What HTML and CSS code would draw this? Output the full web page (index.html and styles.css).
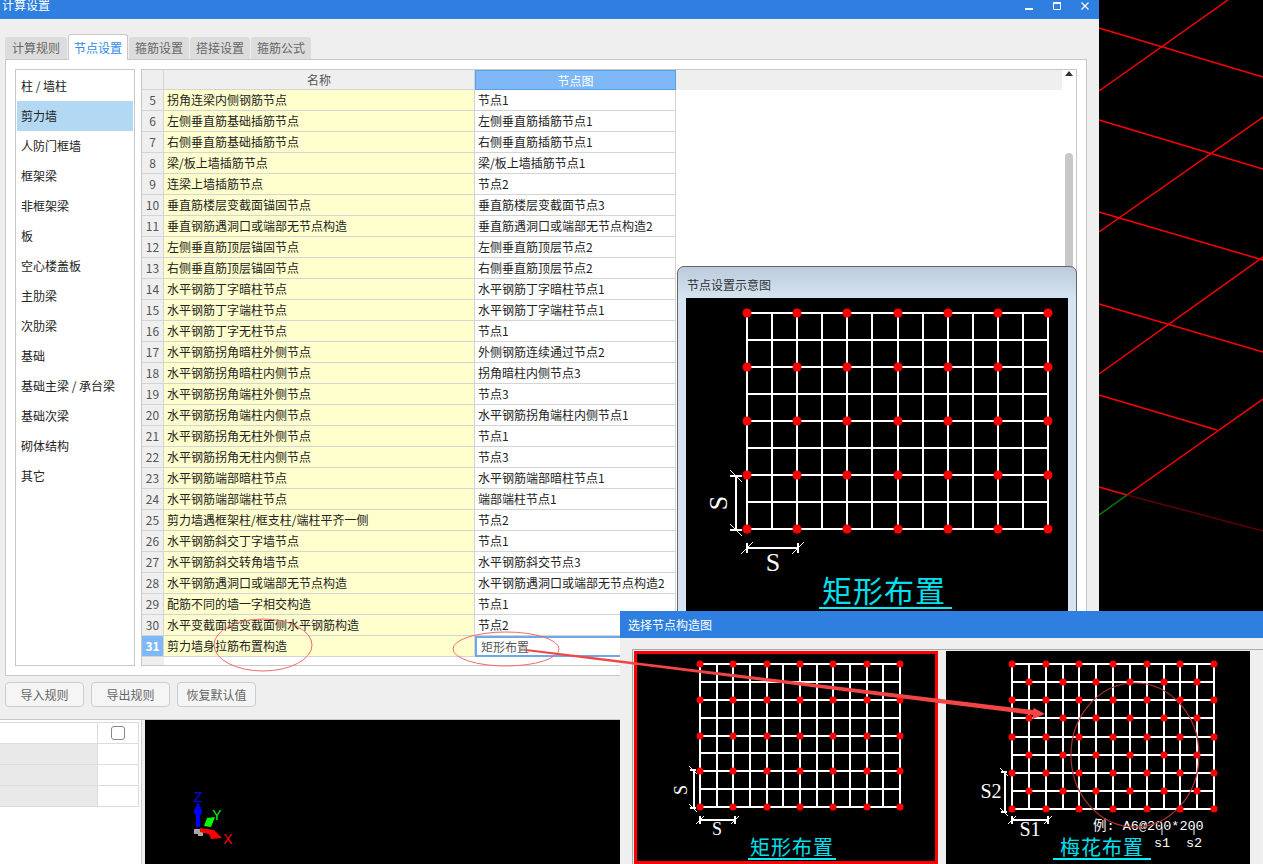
FILE: index.html
```html
<!DOCTYPE html>
<html lang="zh-CN">
<head>
    <meta charset="UTF-8">
    <title>计算设置</title>
    <link rel="stylesheet" href="styles.css">
</head>
<body>
<div class="desk">
    <!-- 3D view behind the dialog -->
    <svg class="scene" width="1263" height="864">
        <g class="scene-red">
            <path d="M1099 28L1263 77M1099 120L1263 169M1099 212L1263 260M1099 304L1263 352M1099 395L1217 430M1099 487L1127 495"/>
            <path d="M1099 91L1228 0M1099 232L1263 117M1099 374L1263 257M1127 495L1263 399"/>
        </g>
        <path class="scene-dark" d="M1127 495L1263 531"/>
        <path class="scene-green" d="M1099 515L1127 495"/>
    </svg>

    <div class="main">
        <div class="titlebar">
            <span class="title-text">计算设置</span>
            <div class="win-controls">
                <svg width="8" height="8"><path d="M0 6h8v2H0z" fill="#fff"/></svg>
                <svg width="8" height="8"><path d="M0.5 1.5h7v6h-7z" fill="none" stroke="#fff"/><path d="M0 0h8v2H0z" fill="#fff"/></svg>
                <svg width="8" height="8"><path d="M0.5 0.5L7.5 7.5M7.5 0.5L0.5 7.5" stroke="#fff" stroke-width="1.3"/></svg>
            </div>
        </div>

        <div class="tabs">
            <div class="tab tab-first">计算规则</div>
            <div class="tab active">节点设置</div>
            <div class="tab">箍筋设置</div>
            <div class="tab">搭接设置</div>
            <div class="tab">箍筋公式</div>
        </div>

        <div class="panel">
            <ul class="side-list">
                <li>柱 / 墙柱</li>
                <li class="selected">剪力墙</li>
                <li>人防门框墙</li>
                <li>框架梁</li>
                <li>非框架梁</li>
                <li>板</li>
                <li>空心楼盖板</li>
                <li>主肋梁</li>
                <li>次肋梁</li>
                <li>基础</li>
                <li>基础主梁 / 承台梁</li>
                <li>基础次梁</li>
                <li>砌体结构</li>
                <li>其它</li>
            </ul>

            <div class="sheet">
                <table class="rules">
                    <thead>
                        <tr><th class="num"></th><th class="name-head">名称</th><th class="node-head">节点图</th><th class="rest-head"></th></tr>
                    </thead>
                    <tbody>
                        <tr><td class="num">5</td><td class="name">拐角连梁内侧钢筋节点</td><td class="node">节点1</td><td></td></tr>
                        <tr><td class="num">6</td><td class="name">左侧垂直筋基础插筋节点</td><td class="node">左侧垂直筋插筋节点1</td><td></td></tr>
                        <tr><td class="num">7</td><td class="name">右侧垂直筋基础插筋节点</td><td class="node">右侧垂直筋插筋节点1</td><td></td></tr>
                        <tr><td class="num">8</td><td class="name">梁/板上墙插筋节点</td><td class="node">梁/板上墙插筋节点1</td><td></td></tr>
                        <tr><td class="num">9</td><td class="name">连梁上墙插筋节点</td><td class="node">节点2</td><td></td></tr>
                        <tr><td class="num">10</td><td class="name">垂直筋楼层变截面锚固节点</td><td class="node">垂直筋楼层变截面节点3</td><td></td></tr>
                        <tr><td class="num">11</td><td class="name">垂直钢筋遇洞口或端部无节点构造</td><td class="node">垂直筋遇洞口或端部无节点构造2</td><td></td></tr>
                        <tr><td class="num">12</td><td class="name">左侧垂直筋顶层锚固节点</td><td class="node">左侧垂直筋顶层节点2</td><td></td></tr>
                        <tr><td class="num">13</td><td class="name">右侧垂直筋顶层锚固节点</td><td class="node">右侧垂直筋顶层节点2</td><td></td></tr>
                        <tr><td class="num">14</td><td class="name">水平钢筋丁字暗柱节点</td><td class="node">水平钢筋丁字暗柱节点1</td><td></td></tr>
                        <tr><td class="num">15</td><td class="name">水平钢筋丁字端柱节点</td><td class="node">水平钢筋丁字端柱节点1</td><td></td></tr>
                        <tr><td class="num">16</td><td class="name">水平钢筋丁字无柱节点</td><td class="node">节点1</td><td></td></tr>
                        <tr><td class="num">17</td><td class="name">水平钢筋拐角暗柱外侧节点</td><td class="node">外侧钢筋连续通过节点2</td><td></td></tr>
                        <tr><td class="num">18</td><td class="name">水平钢筋拐角暗柱内侧节点</td><td class="node">拐角暗柱内侧节点3</td><td></td></tr>
                        <tr><td class="num">19</td><td class="name">水平钢筋拐角端柱外侧节点</td><td class="node">节点3</td><td></td></tr>
                        <tr><td class="num">20</td><td class="name">水平钢筋拐角端柱内侧节点</td><td class="node">水平钢筋拐角端柱内侧节点1</td><td></td></tr>
                        <tr><td class="num">21</td><td class="name">水平钢筋拐角无柱外侧节点</td><td class="node">节点1</td><td></td></tr>
                        <tr><td class="num">22</td><td class="name">水平钢筋拐角无柱内侧节点</td><td class="node">节点3</td><td></td></tr>
                        <tr><td class="num">23</td><td class="name">水平钢筋端部暗柱节点</td><td class="node">水平钢筋端部暗柱节点1</td><td></td></tr>
                        <tr><td class="num">24</td><td class="name">水平钢筋端部端柱节点</td><td class="node">端部端柱节点1</td><td></td></tr>
                        <tr><td class="num">25</td><td class="name">剪力墙遇框架柱/框支柱/端柱平齐一侧</td><td class="node">节点2</td><td></td></tr>
                        <tr><td class="num">26</td><td class="name">水平钢筋斜交丁字墙节点</td><td class="node">节点1</td><td></td></tr>
                        <tr><td class="num">27</td><td class="name">水平钢筋斜交转角墙节点</td><td class="node">水平钢筋斜交节点3</td><td></td></tr>
                        <tr><td class="num">28</td><td class="name">水平钢筋遇洞口或端部无节点构造</td><td class="node">水平钢筋遇洞口或端部无节点构造2</td><td></td></tr>
                        <tr><td class="num">29</td><td class="name">配筋不同的墙一字相交构造</td><td class="node">节点1</td><td></td></tr>
                        <tr><td class="num">30</td><td class="name">水平变截面墙变截面侧水平钢筋构造</td><td class="node">节点2</td><td></td></tr>
                        <tr class="current"><td class="num">31</td><td class="name">剪力墙身拉筋布置构造</td><td class="node">矩形布置</td><td></td></tr>
                        <tr class="tail"><td class="num"></td><td colspan="3"></td></tr>
                    </tbody>
                </table>
                <div class="scroll">
                    <div class="scroll-up"></div>
                    <div class="scroll-thumb"></div>
                </div>
            </div>
        </div>

        <div class="actions">
            <button>导入规则</button>
            <button>导出规则</button>
            <button>恢复默认值</button>
        </div>
    </div>

    <div class="lower">
        <div class="prop-pane">
            <table class="props">
                <tr><td></td><td class="check-cell"><span class="check"></span></td></tr>
                <tr><td class="shaded"></td><td></td></tr>
                <tr><td class="shaded"></td><td></td></tr>
                <tr><td class="shaded"></td><td></td></tr>
            </table>
        </div>
        <div class="view">
            <svg class="axis" width="100" height="144">
                <path d="M49 109h9v7h-5v-2h-4z" fill="#a8a8a8"/>
                <path d="M53 107V92" stroke="#0000ff" stroke-width="4"/>
                <path d="M53 82l4 9-1 4h-6l-1-4z" fill="#0000ff"/>
                <path d="M59 106l3-8 8-1-4 10z" fill="#00ff00"/>
                <path d="M55 108l14 2 8 8-11 1-2-5-9-2z" fill="#ff0000"/>
                <text class="axis-z" x="53" y="82">Z</text>
                <text class="axis-y" x="72" y="100">Y</text>
                <text class="axis-x" x="83" y="124">X</text>
            </svg>
        </div>
    </div>

    <!-- hint window with the picture of the current node -->
    <div class="preview">
        <div class="preview-title">节点设置示意图</div>
        <svg id="previewPic" class="preview-pic" width="382" height="322">
            <path class="dim" d="M50 178V232M44 178H56M44 232H56M61 250H112M61 245V255M112 245V255"/>
            <path class="tick" d="M44 172L56 184M44 226L56 238M55 256L67 244M106 256L118 244"/>
            <text class="letter letter-lg" transform="translate(41 205) rotate(-90)">S</text>
            <text class="letter letter-lg" x="87" y="273">S</text>
            <text class="caption caption-lg" x="198" y="304">矩形布置</text>
            <path class="cap-line" d="M133 310H266"/>
        </svg>
    </div>

    <!-- node picker -->
    <div class="picker">
        <div class="picker-title">选择节点构造图</div>
        <div class="picker-body">
            <div class="card selected">
                <svg id="rectPic" width="304" height="213">
                    <path class="dim" d="M60 119V157M56 119H62M56 157H62M66 169H101M66 165V173M101 165V173"/>
                    <path class="tick" d="M55 115L63 123M55 153L63 161M62 173L70 165M97 173L105 165"/>
                    <text class="letter letter-sm" transform="translate(53 139) rotate(-90)">S</text>
                    <text class="letter letter-sm" x="83" y="184">S</text>
                    <text class="caption" x="158" y="204">矩形布置</text>
                    <path class="cap-line" d="M114 208H202"/>
                </svg>
            </div>
            <div class="card">
                <svg id="plumPic" width="304" height="213">
                    <path class="dim" d="M59 121V161M55 121H61M55 161H61M66 169H102M66 165V173M102 165V173"/>
                    <path class="tick" d="M54 117L62 125M54 157L62 165M62 173L70 165M98 173L106 165"/>
                    <text class="letter" x="45" y="147">S2</text>
                    <text class="letter" x="84" y="185">S1</text>
                    <text class="example" x="147" y="179">例: A6@200*200</text>
                    <path class="tick" d="M216 176V184M248 176V184"/>
                    <text class="example example-s" x="216" y="196">s1</text>
                    <text class="example example-s" x="248" y="196">s2</text>
                    <text class="caption" x="156" y="204">梅花布置</text>
                    <path class="cap-line" d="M107 208H205"/>
                    <ellipse class="pic-ring" cx="189" cy="104" rx="64" ry="72"/>
                </svg>
            </div>
        </div>
    </div>

    <!-- red marks someone drew over the screenshot -->
    <svg class="marks" width="1263" height="864">
        <ellipse cx="263" cy="645" rx="49" ry="26"/>
        <ellipse cx="506" cy="649" rx="53" ry="17"/>
        <polygon points="526,649 1033,710 1034,708 1045,714 1033,719 1033,715 526,651"/>
    </svg>
</div>
<script src="script.js"></script>
</body>
</html>
```

FILE: styles.css
```css
* {
    box-sizing: border-box;
}

body {
    margin: 0;
    background-color: #000;
    font-family: "Noto Sans CJK SC", "Liberation Sans", sans-serif;
    font-size: 12px;
    color: #222;
}

.desk {
    position: relative;
    width: 1263px;
    height: 864px;
    overflow: hidden;
}

.scene {
    position: absolute;
    top: 0;
    left: 0;
}

.scene path {
    fill: none;
    stroke-width: 1.5;
}

.scene-red path {
    fill: none;
    stroke: #f00;
}

.scene .scene-dark {
    stroke: #5c0000;
}

.scene .scene-green {
    stroke: #0a7a0a;
}

/* main dialog */
.main {
    position: relative;
    width: 1099px;
    height: 720px;
    background-color: #efefef;
    border-bottom: 1px solid #c8c8c8;
}

.titlebar {
    display: flex;
    justify-content: space-between;
    height: 19px;
    padding: 0 10px 0 2px;
    background-color: #2e7fe0;
    color: #fff;
    overflow: hidden;
}

.title-text {
    line-height: 10px;
}

.win-controls {
    display: flex;
    gap: 20px;
    padding-top: 2px;
}

.tabs {
    display: flex;
    align-items: flex-end;
    gap: 1px;
    height: 40px;
    padding-left: 5px;
}

.tab {
    position: relative;
    width: 60px;
    height: 22px;
    line-height: 22px;
    text-align: center;
    color: #666;
    background-color: #dcdcdc;
    border-radius: 3px 3px 0 0;
}

.tab-first {
    width: 62px;
}

.tab.active {
    z-index: 1;
    height: 26px;
    line-height: 25px;
    margin-bottom: -1px;
    color: #2e8ae6;
    background-color: #fff;
    border: 1px solid #c8c8c8;
    border-bottom: none;
}

.panel {
    display: flex;
    gap: 6px;
    width: 1082px;
    height: 617px;
    margin-left: 5px;
    padding: 9px;
    background-color: #fff;
    border: 1px solid #c8c8c8;
}

.side-list {
    width: 120px;
    margin: 0;
    padding: 1px 1px;
    list-style: none;
    border: 1px solid #c8c8c8;
}

.side-list li {
    height: 30px;
    line-height: 30px;
    padding-left: 4px;
}

.side-list li.selected {
    background-color: #b3d8f3;
}

.sheet {
    display: flex;
    flex: 1;
    border: 1px solid #c8c8c8;
    overflow: hidden;
}

.rules {
    width: 920px;
    height: 595px;
    flex-shrink: 0;
    table-layout: fixed;
    border-collapse: separate;
    border-spacing: 0;
}

.rules th,
.rules td {
    height: 21px;
    padding: 0 3px 1px;
    font-weight: normal;
    white-space: nowrap;
    overflow: hidden;
}

.rules th {
    height: 20px;
    padding-bottom: 0;
    color: #555;
    background-color: #efefef;
    border-bottom: 1px solid #d4d4d4;
}

.rules .num {
    width: 22px;
    padding: 0 0 1px;
    text-align: center;
    color: #555;
    background-color: #efefef;
    border-right: 1px solid #d4d4d4;
    border-bottom: 1px solid #d4d4d4;
}

.rules .name {
    width: 311px;
    background-color: #ffffcd;
    border-right: 1px solid #d4d4d4;
    border-bottom: 1px solid #d4d4d4;
}

.rules .node {
    width: 201px;
    border-right: 1px solid #d4d4d4;
    border-bottom: 1px solid #d4d4d4;
}

.rules .name-head {
    width: 311px;
    border-right: 1px solid #d4d4d4;
}

.rules .node-head {
    width: 201px;
    color: #fff;
    background-color: #7eb8f7;
    border: 1px solid #5a9fe8;
}

.rules .rest-head {
    border-bottom: none;
}

.current .num {
    font-weight: bold;
}

.rules .current .num {
    color: #fff;
    background-color: #7eb8f7;
}

.rules .current .node {
    padding: 0 0 0 4px;
    color: #555;
    border: 2px solid #6fa8e8;
}

.rules .tail td {
    height: auto;
}

.rules .tail .num {
    border: none;
}

.scroll {
    width: 14px;
    padding-top: 1px;
}

.scroll-up {
    width: 0;
    height: 0;
    margin: 0 0 0 3px;
    border-left: 4px solid transparent;
    border-right: 4px solid transparent;
    border-bottom: 5px solid #333;
}

.scroll-thumb {
    width: 8px;
    height: 350px;
    margin: 77px 0 0 3px;
    background-color: #c8c8c8;
    border-radius: 4px;
}

.actions {
    display: flex;
    gap: 7px;
    padding: 6px 0 0 5px;
}

.actions button {
    width: 79px;
    height: 25px;
    padding: 0;
    font: inherit;
    color: #666;
    background-color: #f5f5f5;
    border: 1px solid #c5cfdc;
    border-radius: 4px;
}

/* below the dialog */
.lower {
    display: flex;
    height: 144px;
}

.prop-pane {
    width: 145px;
    padding-top: 2px;
    background: linear-gradient(to right, #fff 141px, #ccc 141px, #ccc 142px, #efefef 142px);
}

.props {
    width: 139px;
    table-layout: fixed;
    border-collapse: collapse;
}

.props td {
    height: 21px;
    padding: 0;
    border: 1px solid #dcdcdc;
    border-left: none;
}

.props td:first-child {
    width: 97px;
}

.props .shaded {
    background-color: #e9e9e9;
}

.check-cell {
    text-align: center;
}

.check {
    display: block;
    width: 14px;
    height: 14px;
    margin: 0 auto;
    background-color: #fff;
    border: 1px solid #888;
    border-radius: 3px;
}

.view {
    flex: 1;
    background-color: #000;
}

.axis {
    display: block;
}

.axis text {
    font-family: "Liberation Sans", sans-serif;
    font-size: 14px;
    text-anchor: middle;
}

.axis-z {
    fill: #0000ff;
}

.axis-y {
    fill: #00ff00;
}

.axis-x {
    fill: #ff0000;
}

/* hint window */
.preview {
    position: absolute;
    top: 266px;
    left: 677px;
    width: 400px;
    height: 360px;
    padding: 0 8px;
    background: linear-gradient(to bottom, #bccbdb, #d6e4f2 32px);
    border: 1px solid #666;
    border-radius: 7px 7px 0 0;
}

.preview-title {
    height: 31px;
    line-height: 35px;
    padding-left: 1px;
    color: #333;
}

.preview-pic {
    display: block;
    background-color: #000;
}

/* drawings */
.grid-line {
    fill: none;
    stroke: #fff;
    stroke-width: 2;
}

.grid-dot {
    fill: #f00;
}

.dim {
    fill: none;
    stroke: #fff;
    stroke-width: 2;
}

.tick {
    fill: none;
    stroke: #fff;
    stroke-width: 1;
}

.letter {
    font-family: "Liberation Serif", serif;
    font-size: 20px;
    fill: #fff;
    text-anchor: middle;
}

.letter-lg {
    font-size: 26px;
}

.letter-sm {
    font-size: 18px;
}

.caption {
    font-size: 20px;
    letter-spacing: 1px;
    fill: #00e0ee;
    text-anchor: middle;
}

.caption-lg {
    font-size: 30px;
}

.cap-line {
    fill: none;
    stroke: #00f0ff;
    stroke-width: 2;
}

.example {
    font-family: "Liberation Mono", "Noto Sans CJK SC", monospace;
    font-size: 13.5px;
    fill: #fff;
}

.example-s {
    text-anchor: middle;
}

.pic-ring {
    fill: none;
    stroke: #b03030;
    stroke-width: 1.2;
}

/* picker */
.picker {
    position: absolute;
    top: 611px;
    left: 620px;
    right: 0;
    bottom: 0;
    background-color: #efefef;
}

.picker-title {
    height: 27px;
    line-height: 27px;
    padding-left: 8px;
    color: #fff;
    background-color: #2e7fe0;
}

.picker-body {
    display: flex;
    gap: 8px;
    height: 226px;
    margin: 11px 0 0 12px;
    padding: 1px 0 0 1px;
    border-top: 1px solid #aaa;
    border-left: 1px solid #aaa;
}

.card {
    width: 304px;
    height: 213px;
    background-color: #000;
}

.card.selected {
    box-shadow: inset 0 0 0 3px #f00;
}

.card svg {
    display: block;
}

.marks {
    position: absolute;
    top: 0;
    left: 0;
    pointer-events: none;
}

.marks ellipse {
    fill: none;
    stroke: #ee6a6a;
}

.marks polygon {
    fill: #f34545;
}
```

FILE: script.js
```js
// draws the rebar mesh under the labels of each picture
function drawMesh(id, x0, x1, y0, y1, r, plum) {
    var svg = document.getElementById(id);
    var dx = (x1 - x0) / 12;
    var dy = (y1 - y0) / 8;
    var d = '';
    var dots = '';

    for (var i = 0; i <= 12; i++) {
        var x = Math.round(x0 + i * dx);
        d += 'M' + x + ' ' + y0 + 'V' + y1;
    }
    for (var j = 0; j <= 8; j++) {
        var y = Math.round(y0 + j * dy);
        d += 'M' + x0 + ' ' + y + 'H' + x1;
    }

    for (var row = 0; row <= 8; row++) {
        if (!plum && row % 2 == 1) continue;
        for (var col = 0; col <= 12; col++) {
            var on = (row % 2 == 0) ? col % 2 == 0 : col % 2 == 1;
            if (!on) continue;
            dots += '<circle class="grid-dot" cx="' + Math.round(x0 + col * dx) + '" cy="' + Math.round(y0 + row * dy) + '" r="' + r + '"/>';
        }
    }

    svg.insertAdjacentHTML('afterbegin', '<path class="grid-line" d="' + d + '"/>' + dots);
}

drawMesh('previewPic', 61, 362, 15, 231, 4.5, false);
drawMesh('rectPic', 66, 266, 13, 156, 3.5, false);
drawMesh('plumPic', 66, 268, 13, 158, 3.5, true);
```
